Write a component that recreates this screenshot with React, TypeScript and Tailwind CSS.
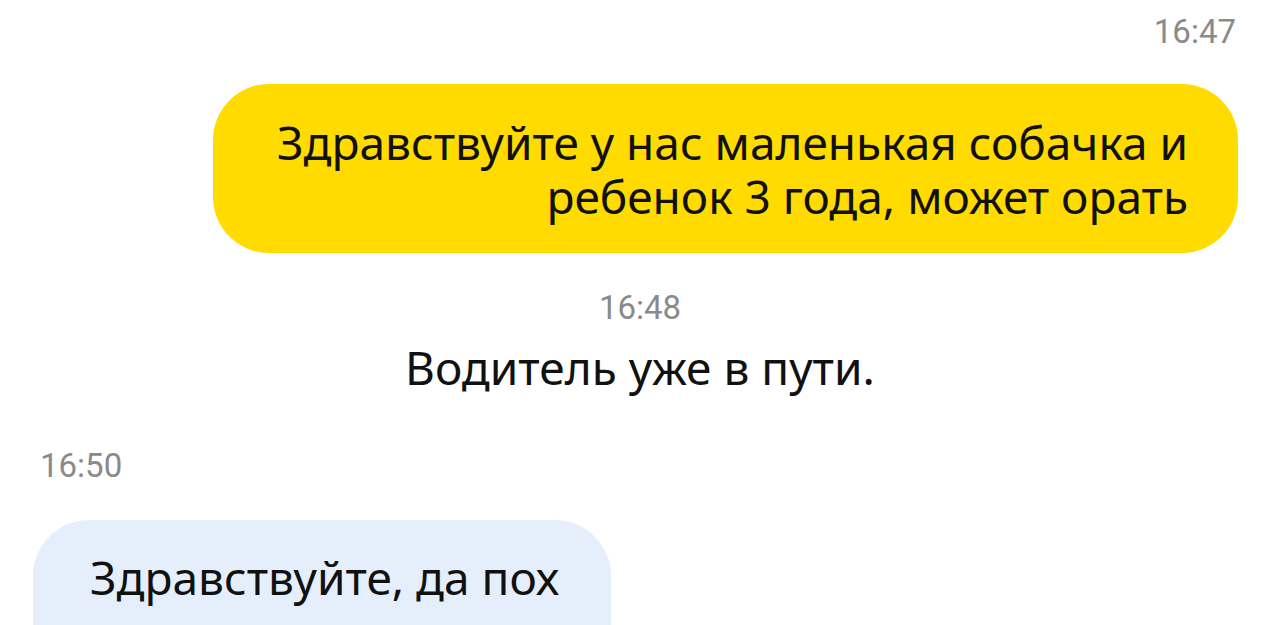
export default function App() {
  return (
    <div className="w-[1280px] h-[625px] overflow-hidden bg-white font-['Noto_Sans',sans-serif] text-[#111]">
      <div className="flex flex-col">
        {/* outgoing */}
        <div className="pt-[13px] pr-[44px] text-right text-[33px] leading-[38px] text-[#8a8a8a] font-['Roboto',sans-serif]">
          16:47
        </div>
        <div className="mt-[33px] ml-[213px] mr-[42px] h-[169px] rounded-[56px] bg-[#ffdb00] flex items-center justify-end pr-[50px]">
          <p className="text-right text-[46px] leading-[54px]">
            Здравствуйте у нас маленькая собачка и
            <br />
            ребенок 3 года, может орать
          </p>
        </div>

        {/* system */}
        <div className="mt-[36px] text-center text-[33px] leading-[38px] text-[#8a8a8a] font-['Roboto',sans-serif]">
          16:48
        </div>
        <div className="mt-[14px] text-center text-[46px] leading-[53px]">
          Водитель уже в пути.
        </div>

        {/* incoming */}
        <div className="mt-[53px] pl-[40px] text-[33px] leading-[38px] text-[#8a8a8a] font-['Roboto',sans-serif]">
          16:50
        </div>
        <div className="mt-[35px] ml-[33px] w-[578px] h-[160px] rounded-[56px] bg-[#e5eefb] flex items-start pl-[57px] pt-[31px]">
          <p className="text-[46px] leading-[53px]">Здравствуйте, да пох</p>
        </div>
      </div>
    </div>
  );
}
